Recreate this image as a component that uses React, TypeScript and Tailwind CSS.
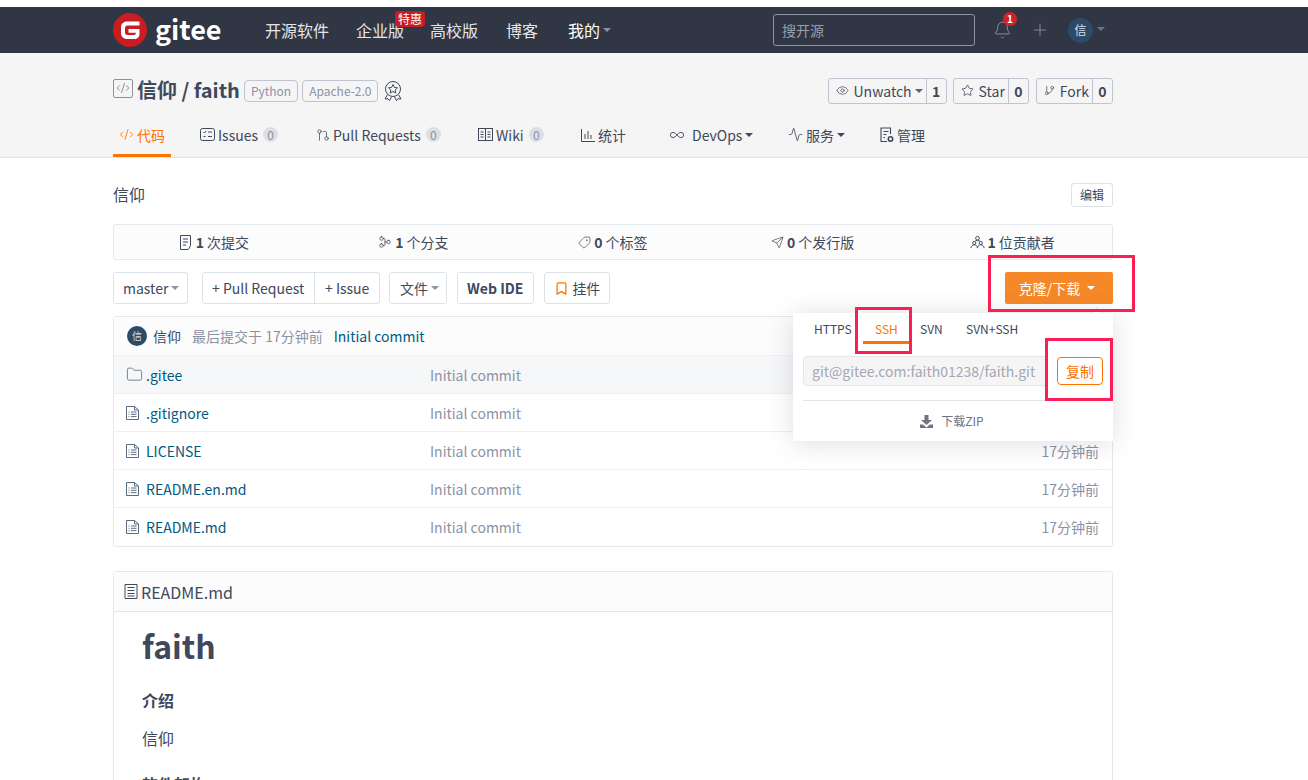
import React from 'react';
import {
  Activity, Bell, Bookmark, CodeXml, Eye, Folder, GitBranch, GitFork, GitPullRequest,
  Infinity as InfinityIcon, Plus, Send, Star, Tag,
} from 'lucide-react';

const font = "font-['Noto_Sans_CJK_SC','Noto_Sans',sans-serif]";

const Caret = ({ className = 'border-t-[#8c92a4]' }: { className?: string }) => (
  <span className={`inline-block w-0 h-0 border-x-4 border-x-transparent border-t-4 ${className}`} />
);

const GiteeLogo = () => (
  <svg className="shrink-0" width="34" height="34" viewBox="0 0 34 34">
    <circle cx="17" cy="17" r="17" fill="#c71d23" />
    <path d="M8 14.500C8 11 10.500 8.500 14 8.500H26.500V12.500H14.500C13 12.500 12 13.500 12 15V19.500C12 21 13 22 14.500 22H21C22 22 22.800 21.300 22.800 20.300V19.800H15.500V16H26C26.300 16 26.500 16.200 26.500 16.500V21C26.500 24 24.200 26 21.500 26H14C10.500 26 8 23.500 8 20z" fill="#fff" />
  </svg>
);

const TopNav = () => (
  <div className="h-[46px] bg-[#303643] flex items-center text-white">
    <div className="w-[1000px] ml-[113px] flex items-center">
      <GiteeLogo />
      <span className="ml-[8px] w-[110px] shrink-0 text-[27px] leading-none font-bold text-white -mt-[3px]">gitee</span>
      <div className="flex items-center text-base text-[#e3e5ea]">
        <span className="w-[91px]">开源软件</span>
        <span className="relative w-[74px]">
          企业版
          <span className="absolute -top-[7px] left-[39px] bg-[#c71d23] text-white text-xs leading-[16px] px-[3px] rounded-sm">特惠</span>
        </span>
        <span className="w-[76px]">高校版</span>
        <span className="w-[62px]">博客</span>
        <span className="flex items-center gap-[3px] text-white">我的<Caret /></span>
      </div>
      <div className="ml-auto flex items-center">
        <div className="w-[202px] h-[32px] border border-[#8f94a3] rounded-[3px] flex items-center pl-[8px] text-sm text-[#9a9fac]">搜开源</div>
        <div className="relative ml-[18px]">
          <Bell className="w-[19px] h-[22px] text-[#8f94a3]" strokeWidth={1.2} />
          <span className="absolute -top-[7px] left-[10px] w-[14px] h-[14px] rounded-full bg-[#d3212b] text-white text-[10px] font-bold leading-[14px] text-center">1</span>
        </div>
        <Plus className="ml-[18px] w-[20px] h-[20px] text-[#8f94a3]" strokeWidth={1} />
        <div className="ml-[18px] w-[25px] h-[25px] rounded-full bg-[#2d4a66] text-[#d8dde5] text-xs flex items-center justify-center">信</div>
        <span className="ml-[4px] mb-[2px] flex"><Caret className="border-t-[#6d7384]" /></span>
        <span className="w-[8px]" />
      </div>
    </div>
  </div>
);

const Counter = ({ icon, label, count, caret }: { icon: React.ReactNode; label: string; count: string; caret?: boolean }) => (
  <div className="h-[26px] flex items-center border border-[#c0c4d0] rounded-[3px] text-[#40485b] text-sm">
    <div className="h-full flex items-center gap-[5px] pl-[7px] pr-[3px] border-r border-[#c0c4d0]">
      {icon}
      <span>{label}</span>
      {caret && <span className="-ml-[2px] flex"><Caret className="border-t-[#5a6275]" /></span>}
    </div>
    <span className="w-[19px] text-center font-bold">{count}</span>
  </div>
);

const Tab = ({ icon, label, count, active, caret, w }: { icon: React.ReactNode; label: string; count?: string; active?: boolean; caret?: boolean; w: string }) => (
  <div className={`${w} h-[42px] flex items-center gap-[3px] border-b-[3px] -mb-px ${active ? 'border-[#fe7300] text-[#fe7300] justify-center' : 'border-transparent text-[#40485b]'}`}>
    {icon}
    <span>{label}</span>
    {caret && <Caret className="border-t-[#40485b]" />}
    {count && <span className="ml-[2px] w-[15px] h-[15px] rounded-full bg-[#dcdfe5] text-[#8c92a4] text-xs leading-[15px] text-center">{count}</span>}
  </div>
);

const IssuesIcon = () => (
  <svg width="15" height="15" viewBox="0 0 15 15" fill="none" stroke="#40485b" strokeWidth="1">
    <rect x="0.500" y="1.500" width="14" height="12" rx="2" />
    <path d="M3.500 5l1 1 1.500-2M8 5h4M3.500 9.500h2M8 9.500h4" />
  </svg>
);

const WikiIcon = () => (
  <svg width="15" height="13" viewBox="0 0 15 13" fill="none" stroke="#40485b" strokeWidth="1">
    <rect x="0.500" y="0.500" width="14" height="12" />
    <path d="M7.500 1v11M2.500 4h3M2.500 6.500h3M2.500 9h3M9.500 4h3M9.500 6.500h3M9.500 9h3" />
  </svg>
);

const StatsIcon = () => (
  <svg width="14" height="14" viewBox="0 0 14 14" fill="none" stroke="#40485b" strokeWidth="1">
    <path d="M0.500 1v12.500H14M4 6v5M7 3v8M10 7v4" />
  </svg>
);

const ManageIcon = () => (
  <svg width="14" height="16" viewBox="0 0 14 16" fill="none" stroke="#40485b" strokeWidth="1.100">
    <path d="M7 14.500H1V1h9.500v6M3.500 4.500h5M3.500 7.500h3M3.500 10.500h1.500" />
    <circle cx="10.500" cy="12" r="2.200" strokeWidth="1.600" />
  </svg>
);

const CommitIcon = () => (
  <svg width="14" height="15" viewBox="0 0 14 15" fill="none" stroke="#40485b" strokeWidth="1">
    <path d="M9 14.500H1.500V.5h10v10M4 4h5M4 7h5M4 10h3M11.500 10.500l-2 4" />
  </svg>
);

const PeopleIcon = () => (
  <svg width="15" height="14" viewBox="0 0 16 14" fill="none" stroke="#40485b" strokeWidth="1">
    <circle cx="8" cy="3" r="2" />
    <circle cx="4.500" cy="8" r="1.700" />
    <circle cx="11.500" cy="8" r="1.700" />
    <path d="M5.500 6L8 5l2.500 1M1 13.500c0-2 1.500-3.500 3.500-3.500S8 11.500 8 13.500c0-2 1.500-3.500 3.500-3.500s3.500 1.500 3.500 3.500" />
  </svg>
);

const RepoHeader = () => (
  <div className="h-[105px] bg-[#f5f5f5] border-b border-[#e3e3e3]">
    <div className="w-[1000px] ml-[113px]">
      <div className="h-[61px] pt-[12px] flex items-center">
        <span className="w-[20px] h-[19px] border border-[#8c92a4] rounded-[2px] flex items-center justify-center text-[#6d7384] mb-[3px]">
          <CodeXml className="w-[14px] h-[14px]" strokeWidth={1.3} />
        </span>
        <span className="ml-[4px] text-[20px] font-bold text-[#40485b] leading-none">信仰 / faith</span>
        <span className="ml-[4px] h-[22px] px-[6px] mt-[3px] border border-[#c0c4d0] rounded-sm text-[12px] leading-[20px] text-[#8c92a4]">Python</span>
        <span className="ml-[4px] h-[22px] px-[6px] mt-[3px] border border-[#c0c4d0] rounded-sm text-[12px] leading-[20px] text-[#8c92a4]">Apache-2.0</span>
        <svg className="ml-[5px] mt-[3px]" width="20" height="22" viewBox="0 0 20 22" fill="none" stroke="#40485b" strokeWidth="1">
          <circle cx="10" cy="9" r="7.500" />
          <path d="M10 4.500l1.400 2.900 3.100.4-2.300 2.100.6 3.100-2.800-1.500-2.800 1.500.6-3.100-2.300-2.100 3.100-.4z" />
          <path d="M4.500 14.500L2 19l3-.3 1.500 2L8.500 17M15.500 14.500L18 19l-3-.3-1.500 2-2-3.700" />
        </svg>
        <div className="ml-auto mt-[2px] flex items-center gap-[6px]">
          <Counter icon={<Eye className="w-[13px] h-[13px]" strokeWidth={1.3} />} label="Unwatch" count="1" caret />
          <Counter icon={<Star className="w-[13px] h-[13px]" strokeWidth={1.5} />} label="Star" count="0" />
          <div className="ml-[1px]">
            <Counter icon={<GitBranch className="w-[11px] h-[13px]" strokeWidth={1.5} />} label="Fork" count="0" />
          </div>
        </div>
      </div>
      <div className="h-[43px] flex items-center text-sm">
        <Tab w="w-[58px]" active icon={<CodeXml className="w-[15px] h-[15px]" strokeWidth={1.4} />} label="代码" />
        <span className="w-[29px]" />
        <Tab w="w-[116px]" icon={<IssuesIcon />} label="Issues" count="0" />
        <Tab w="w-[162px]" icon={<GitPullRequest className="w-[14px] h-[14px]" strokeWidth={1.3} />} label="Pull Requests" count="0" />
        <Tab w="w-[103px]" icon={<WikiIcon />} label="Wiki" count="0" />
        <Tab w="w-[86px]" icon={<StatsIcon />} label="统计" />
        <Tab w="w-[121px]" icon={<InfinityIcon className="w-[20px] h-[16px] mr-[2px]" strokeWidth={1.3} />} label="DevOps" caret />
        <Tab w="w-[92px]" icon={<Activity className="w-[15px] h-[15px]" strokeWidth={1.3} />} label="服务" caret />
        <Tab w="w-[60px]" icon={<ManageIcon />} label="管理" />
      </div>
    </div>
  </div>
);

const Stat = ({ icon, n, label }: { icon: React.ReactNode; n: string; label: string }) => (
  <div className="flex-1 flex items-center justify-center gap-[3px] text-sm text-[#40485b]">
    {icon}
    <span className="font-bold">{n}</span>
    <span>{label}</span>
  </div>
);

const btn = 'h-[32px] border border-[#dce3e8] rounded-[3px] flex items-center text-sm text-[#40485b]';

const files = [
  { name: '.gitee', dir: true },
  { name: '.gitignore' },
  { name: 'LICENSE', time: true },
  { name: 'README.en.md', time: true },
  { name: 'README.md', time: true },
];

const ListFileIcon = () => (
  <svg width="13" height="14" viewBox="0 0 13 14" fill="none" stroke="#5a6a80" strokeWidth="1">
    <path d="M.5.500h8l4 3.500v9.500H.5zM8.500.500V4h4M2.500 6h1M5 6h5.500M2.500 8.300h1M5 8.300h5.500M2.500 10.600h1M5 10.600h5.500" />
  </svg>
);

const FileRow = ({ f, i }: { f: { name: string; dir?: boolean; time?: boolean }; i: number }) => (
  <div className={`h-[38px] flex items-center text-sm ${i === 0 ? 'bg-[#f6f7f9]' : 'bg-white'} border-t border-[#eef0f3]`}>
    <span className="w-[32px] pl-[12px] flex text-[#5a6275]">
      {f.dir ? <Folder className="w-[17px] h-[17px]" strokeWidth={1.1} /> : <ListFileIcon />}
    </span>
    <span className="w-[284px] text-[#005980]">{f.name}</span>
    <span className="text-[#8c92a4]">Initial commit</span>
    {f.time && <span className="ml-auto pr-[13px] text-[#8c92a4]">17分钟前</span>}
  </div>
);

const ClonePopover = () => (
  <div className="absolute right-0 top-[41px] w-[320px] h-[128px] bg-white shadow-[0_2px_24px_rgba(60,70,90,0.18)]">
    <span className="absolute -top-[4px] right-[12px] w-[8px] h-[8px] rotate-45 bg-white border-l border-t border-[#e3e5ea]" />
    <div className="flex h-[38px] pl-[10px] text-xs text-[#40485b]">
      <span className="w-[60px] pl-[11px] pt-[8px]">HTTPS</span>
      <span className="relative w-[57px] pl-[12px] pt-[8px] text-[#fe7300]">
        SSH
        <span className="absolute left-0 top-[28px] w-[47px] h-[3px] bg-[#fe7300]" />
      </span>
      <span className="w-[46px] pt-[8px]">SVN</span>
      <span className="pt-[8px]">SVN+SSH</span>
    </div>
    <div className="flex items-center pl-[10px] pt-[5px]">
      <div className="w-[245px] h-[30px] bg-[#f5f5f5] border border-[#e3e5ea] rounded-sm pl-[8px] text-sm leading-[28px] text-[#a4a8b4]">git@gitee.com:faith01238/faith.git</div>
      <div className="ml-[9px] w-[46px] h-[28px] border border-[#fe7300] rounded-sm text-[#fe7300] text-sm flex items-center justify-center">复制</div>
    </div>
    <div className="mx-[10px] mt-[14px] border-t border-[#e3e5ea]" />
    <div className="flex items-center justify-center gap-[8px] h-[40px] pr-[2px] text-xs text-[#6d7384]">
      <svg width="13" height="13" viewBox="0 0 13 13" fill="#6d7384">
        <path d="M4.500 0h4v5H12L6.500 10 1 5h3.500zM0 9.500h3L6.500 12.500 10 9.500h3V13H0z" />
      </svg>
      <span>下载ZIP</span>
    </div>
  </div>
);

const Mark = ({ className }: { className: string }) => (
  <div className={`absolute border-[3px] border-[#fb1f55] pointer-events-none ${className}`} />
);

export default function App() {
  return (
    <div className={`relative h-[780px] overflow-hidden bg-white pt-[7px] ${font}`}>
      <TopNav />
      <RepoHeader />
      <div className="w-[1000px] ml-[113px]">
        <div className="h-[66px] pt-[25px] flex items-start justify-between">
          <span className="-mt-[2px] text-base leading-[26px] text-[#40485b]">信仰</span>
          <span className="h-[24px] w-[42px] border border-[#dce3e8] rounded-[3px] text-xs leading-[22px] text-center text-[#40485b]">编辑</span>
        </div>
        <div className="h-[36px] flex border border-[#e3e9ed] rounded-[3px] bg-[#fcfcfd]">
          <Stat icon={<CommitIcon />} n="1" label="次提交" />
          <Stat icon={<GitFork className="w-[14px] h-[14px] -rotate-90" strokeWidth={1.3} />} n="1" label="个分支" />
          <Stat icon={<Tag className="w-[13px] h-[13px] rotate-90" strokeWidth={1.3} />} n="0" label="个标签" />
          <Stat icon={<Send className="w-[13px] h-[13px]" strokeWidth={1.3} />} n="0" label="个发行版" />
          <Stat icon={<PeopleIcon />} n="1" label="位贡献者" />
        </div>
        <div className="relative mt-[12px] flex items-center">
          <div className={`${btn} w-[75px] pl-[9px] gap-[3px]`}>master<Caret /></div>
          <div className={`${btn} ml-[14px] w-[178px]`}>
            <span className="w-[112px] pl-[9px] h-full flex items-center border-r border-[#dce3e8]">+ Pull Request</span>
            <span className="pl-[10px]">+ Issue</span>
          </div>
          <div className={`${btn} ml-[9px] pl-[10px] pr-[7px] gap-[3px]`}>文件<Caret /></div>
          <div className={`${btn} ml-[10px] pl-[9px] pr-[10px] font-bold`}>Web IDE</div>
          <div className={`${btn} ml-[10px] pl-[9px] pr-[9px] gap-[3px]`}>
            <Bookmark className="w-[15px] h-[17px] text-[#fe7300]" strokeWidth={2} />挂件
          </div>
          <div className="ml-auto w-[108px] h-[32px] pr-[4px] rounded-[2px] bg-[#f68827] text-white text-sm flex items-center justify-center gap-[7px]">
            克隆/下载<Caret className="border-t-white" />
          </div>
          <ClonePopover />
        </div>
        <div className="mt-[12px] h-[231px] border border-[#e3e9ed] rounded-[3px] overflow-hidden">
          <div className="h-[38px] flex items-center text-sm bg-[#fcfcfd] pl-[13px]">
            <span className="w-[20px] h-[20px] rounded-full bg-[#2d4a66] text-[#d8dde5] text-[10px] flex items-center justify-center">信</span>
            <span className="ml-[6px] text-[#40485b]">信仰</span>
            <span className="ml-[11px] text-[#8c92a4]">最后提交于 17分钟前</span>
            <span className="ml-[11px] text-[#005980]">Initial commit</span>
          </div>
          {files.map((f, i) => <FileRow key={f.name} f={f} i={i} />)}
        </div>
        <div className="mt-[24px] h-[300px] border border-[#e3e9ed] rounded-[3px]">
          <div className="h-[40px] flex items-center pl-[10px] gap-[3px] bg-[#fcfcfd] border-b border-[#e3e5ea] text-base text-[#40485b]">
            <svg width="14" height="15" viewBox="0 0 14 15" fill="none" stroke="#40485b" strokeWidth="1">
              <path d="M1 .5h12v14H1zM3.500 3.500h7M3.500 6.500h7M3.500 9.500h7M3.500 12h7" />
            </svg>
            README.md
          </div>
          <div className="pl-[28px] text-[#40485b]">
            <h1 className="mt-[10px] text-[32px] leading-[46px] font-bold">faith</h1>
            <h3 className="mt-[19px] text-base leading-[26px] font-bold">介绍</h3>
            <p className="mt-[12px] text-base leading-[26px]">信仰</p>
            <h3 className="mt-[20px] text-base leading-[26px] font-bold">软件架构</h3>
          </div>
        </div>
      </div>
      <Mark className="left-[988px] top-[255px] w-[147px] h-[57px]" />
      <Mark className="left-[855px] top-[307px] w-[57px] h-[47px]" />
      <Mark className="left-[1045px] top-[338px] w-[68px] h-[63px]" />
    </div>
  );
}
